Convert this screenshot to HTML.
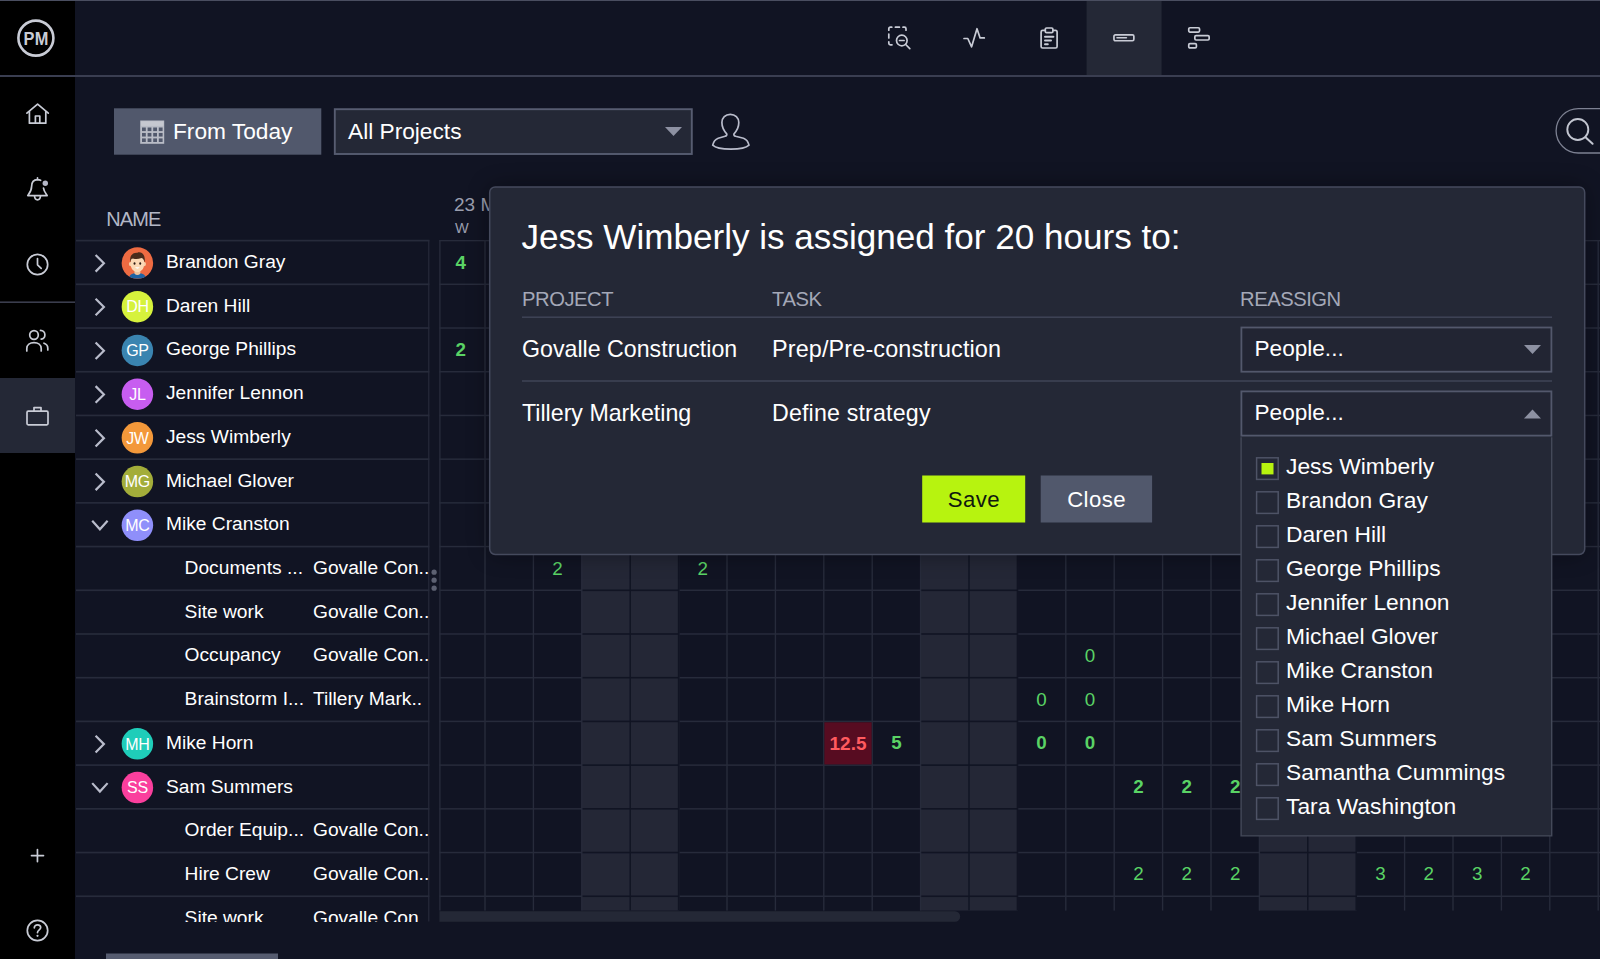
<!DOCTYPE html><html><head><meta charset='utf-8'><title>Workload</title><style>
*{box-sizing:border-box;margin:0;padding:0}
html,body{width:1600px;height:959px;overflow:hidden;background:#111423;}
body{position:relative;font-family:"Liberation Sans",sans-serif;color:#fff}
svg.layer{position:absolute;left:0;top:0;width:1600px;height:959px;overflow:hidden}
.t{position:absolute;white-space:nowrap;line-height:1}
.ic{stroke:#c9ccd6;fill:none;stroke-width:1.7;stroke-linecap:round;stroke-linejoin:round}
.nm,.tk,.pj{position:absolute;line-height:1;font-size:19.2px;white-space:nowrap}
.num{position:absolute;width:48.4px;text-align:center;font-size:18.8px;color:#5ad365;line-height:1}
.num.b{font-weight:bold}
.pn{position:absolute;left:1286px;font-size:22.8px;white-space:nowrap;line-height:1}
.avt{font-family:"Liberation Sans",sans-serif;font-size:16px;fill:#fff;text-anchor:middle;letter-spacing:-.3px}
#clipL{position:absolute;left:0;top:0;width:429.3px;height:921.5px;overflow:hidden}
</style></head><body>
<svg class='layer' viewBox='0 0 1600 959'><clipPath id='gc'><rect x='439' y='240.0' width='1161' height='670.8'/></clipPath><g clip-path='url(#gc)'><rect x='581.80' y='240.00' width='96.80' height='670.80' fill='#242736' /><rect x='920.60' y='240.00' width='96.80' height='670.80' fill='#242736' /><rect x='1259.40' y='240.00' width='96.80' height='670.80' fill='#242736' /><rect x='439.40' y='239.85' width='1160.60' height='1.50' fill='#272b3b' /><rect x='439.40' y='283.56' width='1160.60' height='1.50' fill='#272b3b' /><rect x='439.40' y='327.27' width='1160.60' height='1.50' fill='#272b3b' /><rect x='439.40' y='370.98' width='1160.60' height='1.50' fill='#272b3b' /><rect x='439.40' y='414.69' width='1160.60' height='1.50' fill='#272b3b' /><rect x='439.40' y='458.40' width='1160.60' height='1.50' fill='#272b3b' /><rect x='439.40' y='502.11' width='1160.60' height='1.50' fill='#272b3b' /><rect x='439.40' y='545.82' width='1160.60' height='1.50' fill='#272b3b' /><rect x='439.40' y='589.53' width='1160.60' height='1.50' fill='#272b3b' /><rect x='439.40' y='633.24' width='1160.60' height='1.50' fill='#272b3b' /><rect x='439.40' y='676.95' width='1160.60' height='1.50' fill='#272b3b' /><rect x='439.40' y='720.66' width='1160.60' height='1.50' fill='#272b3b' /><rect x='439.40' y='764.37' width='1160.60' height='1.50' fill='#272b3b' /><rect x='439.40' y='808.08' width='1160.60' height='1.50' fill='#272b3b' /><rect x='439.40' y='851.79' width='1160.60' height='1.50' fill='#272b3b' /><rect x='439.40' y='895.50' width='1160.60' height='1.50' fill='#272b3b' /><rect x='439.40' y='939.21' width='1160.60' height='1.50' fill='#272b3b' /><rect x='484.30' y='240.00' width='1.40' height='670.80' fill='#272b3b' /><rect x='532.70' y='240.00' width='1.40' height='670.80' fill='#272b3b' /><rect x='581.10' y='240.00' width='1.40' height='670.80' fill='#272b3b' /><rect x='629.50' y='240.00' width='1.40' height='670.80' fill='#272b3b' /><rect x='677.90' y='240.00' width='1.40' height='670.80' fill='#272b3b' /><rect x='726.30' y='240.00' width='1.40' height='670.80' fill='#272b3b' /><rect x='774.70' y='240.00' width='1.40' height='670.80' fill='#272b3b' /><rect x='823.10' y='240.00' width='1.40' height='670.80' fill='#272b3b' /><rect x='871.50' y='240.00' width='1.40' height='670.80' fill='#272b3b' /><rect x='919.90' y='240.00' width='1.40' height='670.80' fill='#272b3b' /><rect x='968.30' y='240.00' width='1.40' height='670.80' fill='#272b3b' /><rect x='1016.70' y='240.00' width='1.40' height='670.80' fill='#272b3b' /><rect x='1065.10' y='240.00' width='1.40' height='670.80' fill='#272b3b' /><rect x='1113.50' y='240.00' width='1.40' height='670.80' fill='#272b3b' /><rect x='1161.90' y='240.00' width='1.40' height='670.80' fill='#272b3b' /><rect x='1210.30' y='240.00' width='1.40' height='670.80' fill='#272b3b' /><rect x='1258.70' y='240.00' width='1.40' height='670.80' fill='#272b3b' /><rect x='1307.10' y='240.00' width='1.40' height='670.80' fill='#272b3b' /><rect x='1355.50' y='240.00' width='1.40' height='670.80' fill='#272b3b' /><rect x='1403.90' y='240.00' width='1.40' height='670.80' fill='#272b3b' /><rect x='1452.30' y='240.00' width='1.40' height='670.80' fill='#272b3b' /><rect x='1500.70' y='240.00' width='1.40' height='670.80' fill='#272b3b' /><rect x='1549.10' y='240.00' width='1.40' height='670.80' fill='#272b3b' /><rect x='1597.50' y='240.00' width='1.40' height='670.80' fill='#272b3b' /><rect x='439.20' y='240.00' width='1.40' height='670.80' fill='#272b3b' /><rect x='582.50' y='239.80' width='96.80' height='1.60' fill='#111423' /><rect x='582.50' y='283.51' width='96.80' height='1.60' fill='#111423' /><rect x='582.50' y='327.22' width='96.80' height='1.60' fill='#111423' /><rect x='582.50' y='370.93' width='96.80' height='1.60' fill='#111423' /><rect x='582.50' y='414.64' width='96.80' height='1.60' fill='#111423' /><rect x='582.50' y='458.35' width='96.80' height='1.60' fill='#111423' /><rect x='582.50' y='502.06' width='96.80' height='1.60' fill='#111423' /><rect x='582.50' y='545.77' width='96.80' height='1.60' fill='#111423' /><rect x='582.50' y='589.48' width='96.80' height='1.60' fill='#111423' /><rect x='582.50' y='633.19' width='96.80' height='1.60' fill='#111423' /><rect x='582.50' y='676.90' width='96.80' height='1.60' fill='#111423' /><rect x='582.50' y='720.61' width='96.80' height='1.60' fill='#111423' /><rect x='582.50' y='764.32' width='96.80' height='1.60' fill='#111423' /><rect x='582.50' y='808.03' width='96.80' height='1.60' fill='#111423' /><rect x='582.50' y='851.74' width='96.80' height='1.60' fill='#111423' /><rect x='582.50' y='895.45' width='96.80' height='1.60' fill='#111423' /><rect x='582.50' y='939.16' width='96.80' height='1.60' fill='#111423' /><rect x='629.45' y='240.00' width='1.50' height='670.80' fill='#111423' /><rect x='677.85' y='240.00' width='1.50' height='670.80' fill='#111423' /><rect x='921.30' y='239.80' width='96.80' height='1.60' fill='#111423' /><rect x='921.30' y='283.51' width='96.80' height='1.60' fill='#111423' /><rect x='921.30' y='327.22' width='96.80' height='1.60' fill='#111423' /><rect x='921.30' y='370.93' width='96.80' height='1.60' fill='#111423' /><rect x='921.30' y='414.64' width='96.80' height='1.60' fill='#111423' /><rect x='921.30' y='458.35' width='96.80' height='1.60' fill='#111423' /><rect x='921.30' y='502.06' width='96.80' height='1.60' fill='#111423' /><rect x='921.30' y='545.77' width='96.80' height='1.60' fill='#111423' /><rect x='921.30' y='589.48' width='96.80' height='1.60' fill='#111423' /><rect x='921.30' y='633.19' width='96.80' height='1.60' fill='#111423' /><rect x='921.30' y='676.90' width='96.80' height='1.60' fill='#111423' /><rect x='921.30' y='720.61' width='96.80' height='1.60' fill='#111423' /><rect x='921.30' y='764.32' width='96.80' height='1.60' fill='#111423' /><rect x='921.30' y='808.03' width='96.80' height='1.60' fill='#111423' /><rect x='921.30' y='851.74' width='96.80' height='1.60' fill='#111423' /><rect x='921.30' y='895.45' width='96.80' height='1.60' fill='#111423' /><rect x='921.30' y='939.16' width='96.80' height='1.60' fill='#111423' /><rect x='968.25' y='240.00' width='1.50' height='670.80' fill='#111423' /><rect x='1016.65' y='240.00' width='1.50' height='670.80' fill='#111423' /><rect x='1260.10' y='239.80' width='96.80' height='1.60' fill='#111423' /><rect x='1260.10' y='283.51' width='96.80' height='1.60' fill='#111423' /><rect x='1260.10' y='327.22' width='96.80' height='1.60' fill='#111423' /><rect x='1260.10' y='370.93' width='96.80' height='1.60' fill='#111423' /><rect x='1260.10' y='414.64' width='96.80' height='1.60' fill='#111423' /><rect x='1260.10' y='458.35' width='96.80' height='1.60' fill='#111423' /><rect x='1260.10' y='502.06' width='96.80' height='1.60' fill='#111423' /><rect x='1260.10' y='545.77' width='96.80' height='1.60' fill='#111423' /><rect x='1260.10' y='589.48' width='96.80' height='1.60' fill='#111423' /><rect x='1260.10' y='633.19' width='96.80' height='1.60' fill='#111423' /><rect x='1260.10' y='676.90' width='96.80' height='1.60' fill='#111423' /><rect x='1260.10' y='720.61' width='96.80' height='1.60' fill='#111423' /><rect x='1260.10' y='764.32' width='96.80' height='1.60' fill='#111423' /><rect x='1260.10' y='808.03' width='96.80' height='1.60' fill='#111423' /><rect x='1260.10' y='851.74' width='96.80' height='1.60' fill='#111423' /><rect x='1260.10' y='895.45' width='96.80' height='1.60' fill='#111423' /><rect x='1260.10' y='939.16' width='96.80' height='1.60' fill='#111423' /><rect x='1307.05' y='240.00' width='1.50' height='670.80' fill='#111423' /><rect x='1355.45' y='240.00' width='1.50' height='670.80' fill='#111423' /></g><rect x='824.40' y='722.31' width='47.20' height='42.11' fill='#570c21' /><path d='M439.4 911.3 H955 a5.2 5.2 0 0 1 0 10.4 H439.4 Z' fill='#242836'/><clipPath id='lc'><rect x='75' y='230' width='354.6' height='691.5'/></clipPath><g clip-path='url(#lc)'><rect x='76.00' y='239.75' width='353.60' height='1.70' fill='#272b3b' /><rect x='76.00' y='283.46' width='353.60' height='1.70' fill='#272b3b' /><rect x='76.00' y='327.17' width='353.60' height='1.70' fill='#272b3b' /><rect x='76.00' y='370.88' width='353.60' height='1.70' fill='#272b3b' /><rect x='76.00' y='414.59' width='353.60' height='1.70' fill='#272b3b' /><rect x='76.00' y='458.30' width='353.60' height='1.70' fill='#272b3b' /><rect x='76.00' y='502.01' width='353.60' height='1.70' fill='#272b3b' /><rect x='76.00' y='545.72' width='353.60' height='1.70' fill='#272b3b' /><rect x='76.00' y='589.43' width='353.60' height='1.70' fill='#272b3b' /><rect x='76.00' y='633.14' width='353.60' height='1.70' fill='#272b3b' /><rect x='76.00' y='676.85' width='353.60' height='1.70' fill='#272b3b' /><rect x='76.00' y='720.56' width='353.60' height='1.70' fill='#272b3b' /><rect x='76.00' y='764.27' width='353.60' height='1.70' fill='#272b3b' /><rect x='76.00' y='807.98' width='353.60' height='1.70' fill='#272b3b' /><rect x='76.00' y='851.69' width='353.60' height='1.70' fill='#272b3b' /><rect x='76.00' y='895.40' width='353.60' height='1.70' fill='#272b3b' /><rect x='76.00' y='939.11' width='353.60' height='1.70' fill='#272b3b' /><rect x='428.20' y='240.00' width='1.40' height='682.00' fill='#272b3b' /></g><circle cx='434.1' cy='572.2' r='2.6' fill='#5d6172'/><circle cx='434.1' cy='580.2' r='2.6' fill='#5d6172'/><circle cx='434.1' cy='588.2' r='2.6' fill='#5d6172'/><rect x='106.00' y='953.50' width='172.00' height='6.00' fill='#565c70' /><path d='M95.6 255.00 L103.9 263.30 L95.6 271.60' fill='none' stroke='#b9bccb' stroke-width='2.2'/><g transform='translate(121.65 247.25) scale(1.016)'><clipPath id='fc'><circle cx='15.5' cy='15.5' r='15.5'/></clipPath><circle cx='15.5' cy='15.5' r='15.5' fill='#ee6b42'/><g clip-path='url(#fc)'><path d='M7 31 C7.6 26.8 10.6 25.4 15.5 25.4 C20.4 25.4 23.4 26.8 24 31 Z' fill='#1f63a3'/><g transform='translate(0 1)'><path d='M12.6 21 H18.4 V25 Q15.5 27.4 12.6 25 Z' fill='#efc29a'/><ellipse cx='8.6' cy='15.6' rx='1.5' ry='2.1' fill='#f6cfa8'/><ellipse cx='22.4' cy='15.6' rx='1.5' ry='2.1' fill='#f6cfa8'/><path d='M9 12 C9 8 12 7 15.5 7 C19 7 22 8 22 12 V16.5 C22 20.5 18.8 23.4 15.5 23.4 C12.2 23.4 9 20.5 9 16.5 Z' fill='#fbd9b5'/><path d='M8.6 13.8 C7.4 7.6 10.6 4 15.6 4.4 C17.6 3 24 4.6 22.6 13.8 C22 11.4 21.2 10.2 19.6 9.6 C16 11 11.6 10.4 10.2 10 C9.2 10.8 8.9 12 8.6 13.8Z' fill='#4a2c1c'/><ellipse cx='12.7' cy='15' rx='.95' ry='1.15' fill='#2b1a12'/><ellipse cx='18.3' cy='15' rx='.95' ry='1.15' fill='#2b1a12'/><path d='M13.2 18.8 Q15.5 21.6 17.8 18.8 Z' fill='#fff'/></g></g></g><path d='M95.6 298.71 L103.9 307.01 L95.6 315.31' fill='none' stroke='#b9bccb' stroke-width='2.2'/><circle cx='137.4' cy='306.71' r='15.75' fill='#d6f23c'/><text class='avt' x='137.4' y='312.41'>DH</text><path d='M95.6 342.42 L103.9 350.72 L95.6 359.02' fill='none' stroke='#b9bccb' stroke-width='2.2'/><circle cx='137.4' cy='350.42' r='15.75' fill='#3a84b0'/><text class='avt' x='137.4' y='356.12'>GP</text><path d='M95.6 386.13 L103.9 394.43 L95.6 402.73' fill='none' stroke='#b9bccb' stroke-width='2.2'/><circle cx='137.4' cy='394.13' r='15.75' fill='#c75df0'/><text class='avt' x='137.4' y='399.83'>JL</text><path d='M95.6 429.84 L103.9 438.14 L95.6 446.44' fill='none' stroke='#b9bccb' stroke-width='2.2'/><circle cx='137.4' cy='437.84' r='15.75' fill='#f3983a'/><text class='avt' x='137.4' y='443.54'>JW</text><path d='M95.6 473.55 L103.9 481.85 L95.6 490.15' fill='none' stroke='#b9bccb' stroke-width='2.2'/><circle cx='137.4' cy='481.55' r='15.75' fill='#a3ad3a'/><text class='avt' x='137.4' y='487.25'>MG</text><path d='M92.2 520.86 L99.9 529.26 L107.6 520.86' fill='none' stroke='#b9bccb' stroke-width='2.2'/><circle cx='137.4' cy='525.26' r='15.75' fill='#8f8ffa'/><text class='avt' x='137.4' y='530.96'>MC</text><path d='M95.6 735.81 L103.9 744.11 L95.6 752.41' fill='none' stroke='#b9bccb' stroke-width='2.2'/><circle cx='137.4' cy='743.81' r='15.75' fill='#1fcdb9'/><text class='avt' x='137.4' y='749.51'>MH</text><path d='M92.2 783.12 L99.9 791.52 L107.6 783.12' fill='none' stroke='#b9bccb' stroke-width='2.2'/><circle cx='137.4' cy='787.52' r='15.75' fill='#fa3f9d'/><text class='avt' x='137.4' y='793.22'>SS</text><rect x='0.00' y='0.00' width='75.00' height='959.00' fill='#000' /><rect x='0.00' y='378.00' width='75.00' height='75.00' fill='#242836' /><rect x='0.00' y='301.40' width='75.00' height='1.60' fill='#3a3d4d' /><rect x='1086.60' y='1.00' width='75.00' height='74.50' fill='#242836' /><rect x='0.00' y='75.00' width='1600.00' height='2.00' fill='#3a3e51' /><rect x='0.00' y='-0.20' width='1600.00' height='1.20' fill='#4a4e60' /><circle cx='35.9' cy='38.1' r='17.5' fill='none' stroke='#c9ccd6' stroke-width='2.6'/><text transform='translate(36.1 44.9) scale(.88 1)' text-anchor='middle' font-family='Liberation Sans,sans-serif' font-weight='bold' font-size='18.6' fill='#c9ccd6' letter-spacing='0.3'>PM</text><g class='ic' transform='translate(25.6 102.6)'><path d='M1.3 10.6 L12 1.6 L22.7 10.6'/><path d='M3.8 9 V20.6 H20.2 V9'/><path d='M9.8 20.6 V13.4 H14.2 V20.6'/></g><g class='ic' transform='translate(26 177)'><path d='M11.5 0.9 V2.4 M14.6 3.3 C13.6 2.8 12.6 2.6 11.5 2.6 C7.6 2.8 5.6 5.8 5.6 9.4 C5.6 13.6 3.8 15.8 1.8 18.6 H21.2 C19.6 16.2 17.9 14.4 17.5 11.2'/><path d='M8.5 19 C8.7 21.4 10 22.8 11.5 22.8 C13 22.8 14.3 21.4 14.5 19'/><circle cx='19.3' cy='6.2' r='2.7' fill='#b4b6c6' stroke='none'/></g><g class='ic' transform='translate(26 253)'><circle cx='11.5' cy='11.5' r='10.2'/><path d='M11.5 5.5 V11.8 L15.2 15.3'/></g><g class='ic' transform='translate(25 328)'><circle cx='9' cy='7' r='4.3'/><path d='M1.8 23 V20.5 C1.8 16.8 5 14.6 9 14.6 C13 14.6 16.2 16.8 16.2 20.5 V23'/><path d='M15.5 2.4 C18 2.4 19.9 4.4 19.9 6.8 C19.9 9.2 18.2 10.9 16.2 11.2'/><path d='M19 15.2 C21.3 16 22.8 17.8 22.8 20.2 V22'/></g><g class='ic' transform='translate(26 405)'><rect x='1' y='6.2' width='21' height='13.6' rx='1.2'/><path d='M8 6 V2.6 H15 V6'/></g><g class='ic' transform='translate(30 848)'><path d='M7.45 1.6 V13.6 M1.5 7.6 H13.5'/></g><g class='ic' transform='translate(26 919)'><circle cx='11.5' cy='11.5' r='10.2'/><path d='M8.3 8.8 C8.3 6.8 9.8 5.8 11.5 5.8 C13.3 5.8 14.7 6.9 14.7 8.6 C14.7 10.8 11.5 11 11.5 13.6'/><circle cx='11.5' cy='16.8' r='1.1' fill='#c9ccd6' stroke='none'/></g><g class='ic' transform='translate(887 26)'><path d='M1.8 4.2 V2.8 C1.8 1.8 2.4 1.2 3.4 1.2 H4.8 M8.4 1.2 H12.4 M16 1.2 H17.4 C18.4 1.2 19 1.8 19 2.8 V4.2 M1.8 8 V12 M1.8 15.8 V17.2 C1.8 18.2 2.4 18.8 3.4 18.8 H5'/><circle cx='14.8' cy='14.5' r='5.3'/><path d='M12.5 14.5 H17.1 M18.7 18.5 L22.8 22.6'/></g><g class='ic' transform='translate(962 27)'><path d='M2 11.5 H5.8 L9.6 19.8 L15 1.7 L18.1 10.9 H22.3'/></g><g class='ic' transform='translate(1039 26)'><path d='M6.3 4.4 H3.6 C2.6 4.4 2.1 5 2.1 6 V20.5 C2.1 21.5 2.6 22 3.6 22 H16.6 C17.6 22 18.1 21.5 18.1 20.5 V6 C18.1 5 17.6 4.4 16.6 4.4 H13.9'/><rect x='6.3' y='2' width='7.6' height='4.6' rx='1.2'/><path d='M6 10.7 H14.4 M6 14.6 H12 M6 18.2 H8.8' stroke-width='2'/></g><g class='ic' transform='translate(1112 33)'><rect x='1.95' y='1.85' width='19.9' height='5.9' rx='1.4'/><path d='M5 4.8 H14.4' stroke-width='1.6'/></g><g class='ic' transform='translate(1187 26)'><rect x='1.75' y='1.75' width='10.8' height='4.3' rx='1.2'/><rect x='7.85' y='9.6' width='14.3' height='4.4' rx='1.2'/><rect x='1.75' y='17.6' width='7.65' height='4.3' rx='1.2'/></g><rect x='114.00' y='108.30' width='207.30' height='46.40' fill='#51586c' /><g transform='translate(140.2 120.5)'><rect x='0' y='0' width='24' height='23.3' fill='#b9bcc6'/><rect x='0.8' y='0.8' width='22.4' height='4.6' fill='#c6c8d0'/><rect x='1.8' y='7.00' width='3.8' height='3.6' fill='#51586c'/><rect x='7.4' y='7.00' width='3.8' height='3.6' fill='#51586c'/><rect x='13.0' y='7.00' width='3.8' height='3.6' fill='#51586c'/><rect x='18.6' y='7.00' width='3.8' height='3.6' fill='#51586c'/><rect x='1.8' y='12.45' width='3.8' height='3.6' fill='#51586c'/><rect x='7.4' y='12.45' width='3.8' height='3.6' fill='#51586c'/><rect x='13.0' y='12.45' width='3.8' height='3.6' fill='#51586c'/><rect x='18.6' y='12.45' width='3.8' height='3.6' fill='#51586c'/><rect x='1.8' y='17.90' width='3.8' height='3.6' fill='#51586c'/><rect x='7.4' y='17.90' width='3.8' height='3.6' fill='#51586c'/><rect x='13.0' y='17.90' width='3.8' height='3.6' fill='#51586c'/><rect x='18.6' y='17.90' width='3.8' height='3.6' fill='#51586c'/></g><rect x='334.8' y='109.2' width='357' height='44.8' fill='#242836' stroke='#575c71' stroke-width='1.9'/><path d='M665 127 H682 L673.5 136 Z' fill='#8d91a2'/><path d='M730.3 114.3 C725.4 114.3 721.9 117.8 721.9 122.6 C721.9 127.5 724.2 131.2 726.7 133.8 C727.2 135.2 726.4 135.8 725.1 136.2 L718.2 138.2 C715.3 139.3 713.4 142 712.7 145.2 C718 150.5 743.6 150.5 749 145.2 C748.3 142 746.4 139.3 743.5 138.2 L735.6 136.2 C734.3 135.8 733.5 135.2 734 133.8 C736.5 131.2 738.8 127.5 738.8 122.6 C738.8 117.8 735.2 114.3 730.3 114.3 Z' fill='none' stroke='#b9bccb' stroke-width='1.7' stroke-linejoin='round'/><rect x='1556.1' y='108.6' width='80' height='44.4' rx='22.2' fill='none' stroke='#7d8192' stroke-width='1.3'/><circle cx='1577.8' cy='129.5' r='10.5' fill='none' stroke='#c2c5d0' stroke-width='1.9'/><path d='M1585.5 137.2 L1592.6 143.8' stroke='#c2c5d0' stroke-width='2' stroke-linecap='round'/></svg>
<div class='t' style='left:454px;top:195px;font-size:19px;color:#9a9eae'>23 M</div>
<div class='t' style='left:455px;top:221px;font-size:14.5px;color:#9a9eae'>W</div>
<div class='num b' style='left:436.6px;top:253.5px'>4</div>
<div class='num b' style='left:436.6px;top:340.9px'>2</div>
<div class='num' style='left:533.4px;top:559.5px'>2</div>
<div class='num' style='left:678.6px;top:559.5px'>2</div>
<div class='num' style='left:1065.8px;top:646.9px'>0</div>
<div class='num' style='left:1017.4px;top:690.6px'>0</div>
<div class='num' style='left:1065.8px;top:690.6px'>0</div>
<div class='num b' style='left:823.8px;top:734.0px;color:#ff5a5f;font-size:19px'>12.5</div>
<div class='num b' style='left:872.2px;top:734.3px'>5</div>
<div class='num b' style='left:1017.4px;top:734.3px'>0</div>
<div class='num b' style='left:1065.8px;top:734.3px'>0</div>
<div class='num b' style='left:1114.2px;top:778.0px'>2</div>
<div class='num b' style='left:1162.6px;top:778.0px'>2</div>
<div class='num b' style='left:1211.0px;top:778.0px'>2</div>
<div class='num' style='left:1114.2px;top:865.4px'>2</div>
<div class='num' style='left:1162.6px;top:865.4px'>2</div>
<div class='num' style='left:1211.0px;top:865.4px'>2</div>
<div class='num' style='left:1356.2px;top:865.4px'>3</div>
<div class='num' style='left:1404.6px;top:865.4px'>2</div>
<div class='num' style='left:1453.0px;top:865.4px'>3</div>
<div class='num' style='left:1501.4px;top:865.4px'>2</div>
<div class='t' style='left:106.3px;top:208.7px;font-size:20px;letter-spacing:-.95px;color:#b3b7c6'>NAME</div>
<div id='clipL'>
<div class='nm' style='left:166px;top:252.0px'>Brandon Gray</div>
<div class='nm' style='left:166px;top:295.7px'>Daren Hill</div>
<div class='nm' style='left:166px;top:339.4px'>George Phillips</div>
<div class='nm' style='left:166px;top:383.1px'>Jennifer Lennon</div>
<div class='nm' style='left:166px;top:426.8px'>Jess Wimberly</div>
<div class='nm' style='left:166px;top:470.6px'>Michael Glover</div>
<div class='nm' style='left:166px;top:514.3px'>Mike Cranston</div>
<div class='tk' style='left:184.6px;top:558.0px'>Documents ...</div><div class='pj' style='left:313px;top:558.0px'>Govalle Con..</div>
<div class='tk' style='left:184.6px;top:601.7px'>Site work</div><div class='pj' style='left:313px;top:601.7px'>Govalle Con..</div>
<div class='tk' style='left:184.6px;top:645.4px'>Occupancy</div><div class='pj' style='left:313px;top:645.4px'>Govalle Con..</div>
<div class='tk' style='left:184.6px;top:689.1px'>Brainstorm I...</div><div class='pj' style='left:313px;top:689.1px'>Tillery Mark..</div>
<div class='nm' style='left:166px;top:732.8px'>Mike Horn</div>
<div class='nm' style='left:166px;top:776.5px'>Sam Summers</div>
<div class='tk' style='left:184.6px;top:820.2px'>Order Equip...</div><div class='pj' style='left:313px;top:820.2px'>Govalle Con..</div>
<div class='tk' style='left:184.6px;top:863.9px'>Hire Crew</div><div class='pj' style='left:313px;top:863.9px'>Govalle Con..</div>
<div class='tk' style='left:184.6px;top:907.7px'>Site work</div><div class='pj' style='left:313px;top:907.7px'>Govalle Con</div>
</div>
<div class='t' style='left:173px;top:120px;font-size:22.7px'>From Today</div>
<div class='t' style='left:348px;top:120px;font-size:22.7px'>All Projects</div>
<div style='position:absolute;left:492px;top:189px;width:1090px;height:363px;border-radius:7px;box-shadow:0 0 22px 2px rgba(0,0,8,.42)'></div>
<svg class='layer' viewBox='0 0 1600 959'><rect x='489.7' y='186.9' width='1095' height='367.6' rx='5.5' fill='#242836' stroke='#454a5d' stroke-width='1.5'/><rect x='522.00' y='316.45' width='1030.00' height='1.50' fill='#3f4457' /><rect x='522.00' y='380.25' width='1030.00' height='1.50' fill='#3f4457' /><rect x='1241.4' y='327.5' width='310' height='44.2' fill='#222533' stroke='#53586c' stroke-width='1.8'/><path d='M1524 345.0 H1541 L1532.5 354.0 Z' fill='#8d91a2'/><rect x='1241.4' y='391.4' width='310' height='44.2' fill='#222533' stroke='#53586c' stroke-width='1.8'/><path d='M1524 418.4 H1541 L1532.5 409.4 Z' fill='#8d91a2'/><rect x='922.20' y='475.50' width='103.00' height='47.00' fill='#b7f30f' /><rect x='1040.70' y='475.50' width='111.40' height='47.00' fill='#51586c' /><path d='M1241.1 437.3 V835.9 H1551.7 V437.3' fill='#242836' stroke='#444959' stroke-width='1.4'/><rect x='1256.6' y='457.8' width='21.6' height='21.6' fill='#242836' stroke='#4e5366' stroke-width='1.5'/><rect x='1261.50' y='463.00' width='12.00' height='11.40' fill='#b7f30f' /><rect x='1256.6' y='491.8' width='21.6' height='21.6' fill='#242836' stroke='#4e5366' stroke-width='1.5'/><rect x='1256.6' y='525.8' width='21.6' height='21.6' fill='#242836' stroke='#4e5366' stroke-width='1.5'/><rect x='1256.6' y='559.8' width='21.6' height='21.6' fill='#242836' stroke='#4e5366' stroke-width='1.5'/><rect x='1256.6' y='593.8' width='21.6' height='21.6' fill='#242836' stroke='#4e5366' stroke-width='1.5'/><rect x='1256.6' y='627.8' width='21.6' height='21.6' fill='#242836' stroke='#4e5366' stroke-width='1.5'/><rect x='1256.6' y='661.8' width='21.6' height='21.6' fill='#242836' stroke='#4e5366' stroke-width='1.5'/><rect x='1256.6' y='695.8' width='21.6' height='21.6' fill='#242836' stroke='#4e5366' stroke-width='1.5'/><rect x='1256.6' y='729.8' width='21.6' height='21.6' fill='#242836' stroke='#4e5366' stroke-width='1.5'/><rect x='1256.6' y='763.8' width='21.6' height='21.6' fill='#242836' stroke='#4e5366' stroke-width='1.5'/><rect x='1256.6' y='797.8' width='21.6' height='21.6' fill='#242836' stroke='#4e5366' stroke-width='1.5'/></svg>
<div class='t' style='left:521.5px;top:219.2px;font-size:35.1px'>Jess Wimberly is assigned for 20 hours to:</div>
<div class='t' style='left:522px;top:288.8px;font-size:20.2px;letter-spacing:-.45px;color:#a4a8b8'>PROJECT</div>
<div class='t' style='left:772px;top:288.8px;font-size:20.2px;letter-spacing:-.45px;color:#a4a8b8'>TASK</div>
<div class='t' style='left:1240px;top:288.8px;font-size:20.2px;letter-spacing:-.45px;color:#a4a8b8'>REASSIGN</div>
<div class='t' style='left:522px;top:337.5px;font-size:23.2px'>Govalle Construction</div>
<div class='t' style='left:772px;top:337.5px;font-size:23.4px;letter-spacing:.14px'>Prep/Pre-construction</div>
<div class='t' style='left:522px;top:401.5px;font-size:23.2px'>Tillery Marketing</div>
<div class='t' style='left:772px;top:401.5px;font-size:23.2px;letter-spacing:.18px'>Define strategy</div>
<div class='t' style='left:1254.5px;top:338px;font-size:22.6px'>People...</div>
<div class='t' style='left:1254.5px;top:402px;font-size:22.6px'>People...</div>
<div class='t' style='left:922.4px;top:489px;width:103px;text-align:center;font-size:22.2px;letter-spacing:.4px;color:#10180f'>Save</div>
<div class='t' style='left:1040.9px;top:489px;width:111.5px;text-align:center;font-size:22.2px;letter-spacing:.45px'>Close</div>
<div class='pn' style='top:455.4px'>Jess Wimberly</div>
<div class='pn' style='top:489.4px'>Brandon Gray</div>
<div class='pn' style='top:523.4px'>Daren Hill</div>
<div class='pn' style='top:557.4px'>George Phillips</div>
<div class='pn' style='top:591.4px'>Jennifer Lennon</div>
<div class='pn' style='top:625.4px'>Michael Glover</div>
<div class='pn' style='top:659.4px'>Mike Cranston</div>
<div class='pn' style='top:693.4px'>Mike Horn</div>
<div class='pn' style='top:727.4px'>Sam Summers</div>
<div class='pn' style='top:761.4px'>Samantha Cummings</div>
<div class='pn' style='top:795.4px'>Tara Washington</div>
</body></html>
